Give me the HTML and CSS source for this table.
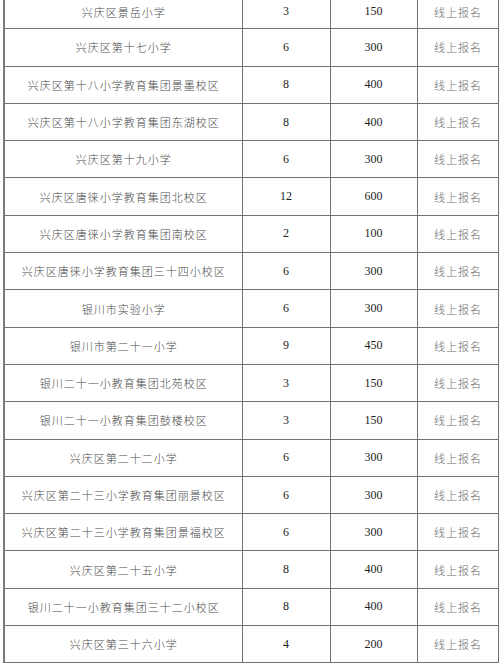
FILE: index.html
```html
<!DOCTYPE html>
<html lang="zh-CN">
<head>
<meta charset="utf-8">
<link rel="stylesheet" href="styles.css">
</head>
<body>
<div class="page">
<table class="sheet">
<colgroup><col class="c-name"><col class="c-cls"><col class="c-num"><col class="c-way"></colgroup>
<tbody>
<tr class="first"><td class="name">兴庆区景岳小学</td><td class="n">3</td><td class="n">150</td><td class="way">线上报名</td></tr>
<tr><td class="name">兴庆区第十七小学</td><td class="n">6</td><td class="n">300</td><td class="way">线上报名</td></tr>
<tr><td class="name">兴庆区第十八小学教育集团景墨校区</td><td class="n">8</td><td class="n">400</td><td class="way">线上报名</td></tr>
<tr><td class="name">兴庆区第十八小学教育集团东湖校区</td><td class="n">8</td><td class="n">400</td><td class="way">线上报名</td></tr>
<tr><td class="name">兴庆区第十九小学</td><td class="n">6</td><td class="n">300</td><td class="way">线上报名</td></tr>
<tr><td class="name">兴庆区唐徕小学教育集团北校区</td><td class="n">12</td><td class="n">600</td><td class="way">线上报名</td></tr>
<tr><td class="name">兴庆区唐徕小学教育集团南校区</td><td class="n">2</td><td class="n">100</td><td class="way">线上报名</td></tr>
<tr><td class="name">兴庆区唐徕小学教育集团三十四小校区</td><td class="n">6</td><td class="n">300</td><td class="way">线上报名</td></tr>
<tr><td class="name">银川市实验小学</td><td class="n">6</td><td class="n">300</td><td class="way">线上报名</td></tr>
<tr><td class="name">银川市第二十一小学</td><td class="n">9</td><td class="n">450</td><td class="way">线上报名</td></tr>
<tr><td class="name">银川二十一小教育集团北苑校区</td><td class="n">3</td><td class="n">150</td><td class="way">线上报名</td></tr>
<tr><td class="name">银川二十一小教育集团鼓楼校区</td><td class="n">3</td><td class="n">150</td><td class="way">线上报名</td></tr>
<tr><td class="name">兴庆区第二十二小学</td><td class="n">6</td><td class="n">300</td><td class="way">线上报名</td></tr>
<tr><td class="name">兴庆区第二十三小学教育集团丽景校区</td><td class="n">6</td><td class="n">300</td><td class="way">线上报名</td></tr>
<tr><td class="name">兴庆区第二十三小学教育集团景福校区</td><td class="n">6</td><td class="n">300</td><td class="way">线上报名</td></tr>
<tr><td class="name">兴庆区第二十五小学</td><td class="n">8</td><td class="n">400</td><td class="way">线上报名</td></tr>
<tr><td class="name">银川二十一小教育集团三十二小校区</td><td class="n">8</td><td class="n">400</td><td class="way">线上报名</td></tr>
<tr><td class="name">兴庆区第三十六小学</td><td class="n">4</td><td class="n">200</td><td class="way">线上报名</td></tr>
</tbody>
</table>
</div>
</body>
</html>
```
FILE: styles.css
```css
html, body {
  margin: 0;
  padding: 0;
  background: #ffffff;
}
.page {
  width: 500px;
  height: 664px;
  overflow: hidden;
  padding-left: 3px;
  box-sizing: border-box;
}
.sheet {
  margin-top: -9px;
  border-collapse: collapse;
  table-layout: fixed;
  width: 494px;
}
.c-name { width: 238px; }
.c-cls { width: 88px; }
.c-num { width: 87px; }
.c-way { width: 81px; }
.sheet tr { height: 37.3px; }
.sheet td {
  border: 1px solid #727272;
  padding: 0;
  text-align: center;
  vertical-align: middle;
  white-space: nowrap;
}
.sheet td:first-child { border-left: 2px solid #7a7a7a; }
.first td { padding-top: 3px; }
.name, .way {
  font-family: "Noto Sans CJK SC", sans-serif;
  font-weight: 300;
  font-size: 11px;
  letter-spacing: 1px;
  text-indent: 1px;
  color: #4a4a4a;
}
.way { color: #6a6a6a; }
.n {
  font-family: "Liberation Serif", serif;
  font-size: 12px;
  color: #1e1e1e;
}
```
